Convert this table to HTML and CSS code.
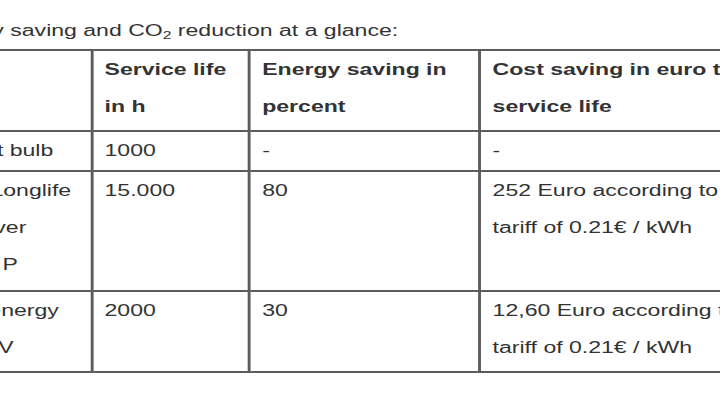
FILE: index.html
```html
<!DOCTYPE html>
<html lang="en">
<head>
<meta charset="utf-8">
<title>Cost saving and CO2 reduction</title>
<link rel="stylesheet" href="styles.css">
</head>
<body>
<div class="stage">
  <div class="sheet">
    <p class="lead">Energy saving and CO<sub>2</sub> reduction at a glance:</p>
    <table class="grid">
      <colgroup>
        <col class="c-lamp">
        <col class="c-life">
        <col class="c-pct">
        <col class="c-cost">
      </colgroup>
      <tr class="r-head">
        <th></th>
        <th>Service life<br>in h</th>
        <th>Energy saving in<br>percent</th>
        <th>Cost saving in euro throughout<br>service life</th>
      </tr>
      <tr class="r-one">
        <td>Light bulb</td>
        <td>1000</td>
        <td>-</td>
        <td>-</td>
      </tr>
      <tr class="r-three">
        <td>ES Longlife<br>eSaver<br>ESL P</td>
        <td>15.000</td>
        <td>80</td>
        <td>252 Euro according to the<br>tariff of 0.21€ / kWh</td>
      </tr>
      <tr class="r-two">
        <td>HL energy<br>230 V</td>
        <td>2000</td>
        <td>30</td>
        <td>12,60 Euro according to the<br>tariff of 0.21€ / kWh</td>
      </tr>
    </table>
  </div>
</div>
</body>
</html>
```

FILE: styles.css
```css
html, body {
  margin: 0;
  padding: 0;
  overflow: hidden;
  background: #ffffff;
}

body {
  width: 720px;
  height: 405px;
  font-family: "Liberation Sans", Arial, sans-serif;
  font-size: 16px;
  color: #333333;
}

.stage {
  transform: scaleX(1.44);
  transform-origin: 0 0;
  padding-top: 12px;
}

.sheet {
  margin-left: -48px;
  width: 700px;
}

.lead {
  margin: 0;
  line-height: 37px;
  white-space: nowrap;
}

.lead sub {
  font-size: 0.68em;
  line-height: 0;
  vertical-align: -0.25em;
}

.grid {
  margin-left: 5.6px;
  border-collapse: collapse;
  table-layout: fixed;
  width: 642px;
}

.c-lamp { width: 105px; }
.c-life { width: 109.5px; }
.c-pct  { width: 160px; }
.c-cost { width: 267.5px; }

.grid th,
.grid td {
  border: 2px solid #5c5c5c;
  padding: 0 0 5px 8px;
  text-align: left;
  vertical-align: top;
  line-height: 37px;
  white-space: nowrap;
  overflow: hidden;
}

.grid th {
  font-weight: bold;
}

.r-one td { padding-bottom: 1px; }
.r-three td { padding-bottom: 7px; }
.r-two td { padding-bottom: 5px; }
```
